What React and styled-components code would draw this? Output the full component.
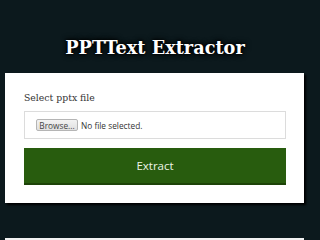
import React from "react";
import styled, { createGlobalStyle } from "styled-components";

const Global = createGlobalStyle`
  html, body { margin: 0; padding: 0; background: #0c191d; }
  body { font-family: "Noto Sans", sans-serif; }
`;

const Page = styled.div`
  width: 320px;
  height: 240px;
  overflow: hidden;
  background: #0c191d;
  display: flex;
  flex-direction: column;
  padding-top: 37px;
  box-sizing: border-box;
`;

const Title = styled.h1`
  margin: 0 0 14px 0;
  width: 310px;
  text-align: center;
  font-family: "DejaVu Serif", serif;
  font-weight: bold;
  font-size: 17.7px;
  line-height: 22px;
  color: #ffffff;
  text-shadow: 0 0 2px #000, 0 0 4px #000, 0 0 6px #000;
`;

const Card = styled.div`
  margin-left: 5px;
  width: 299px;
  background: #ffffff;
  box-sizing: border-box;
  padding: 18px 18px 18px 19px;
  box-shadow: 2px 2px 2px #000;
  display: flex;
  flex-direction: column;
`;

const Label = styled.label`
  font-family: "DejaVu Serif", serif;
  font-size: 9.3px;
  line-height: 14px;
  color: #333;
  margin-bottom: 6px;
`;

const FileBox = styled.div`
  height: 28px;
  border: 1px solid #dcdcdc;
  box-sizing: border-box;
  display: flex;
  align-items: center;
  padding-left: 11px;
  gap: 3px;
  margin-bottom: 9px;
`;

const BrowseButton = styled.span`
  display: inline-flex;
  align-items: center;
  justify-content: center;
  width: 42px;
  height: 12px;
  box-sizing: border-box;
  border: 1px solid #b5b5b5;
  border-radius: 2px;
  background: linear-gradient(#f2f2f2, #e0e0e0);
  font-size: 8.3px;
  color: #444;
  font-family: "Open Sans", sans-serif;
`;

const FileName = styled.span`
  font-family: "Open Sans", sans-serif;
  font-size: 8.3px;
  color: #333;
`;

const ExtractButton = styled.button`
  height: 37px;
  border: none;
  border-bottom: 2px solid #1d4308;
  background: #285c0e;
  color: #eef4e8;
  font-family: "Open Sans", sans-serif;
  font-size: 11.5px;
  cursor: pointer;
  padding: 0;
`;

const NextCard = styled.div`
  margin-left: 5px;
  width: 299px;
  height: 10px;
  margin-top: 35px;
  background: #f2f2f2;
  flex-shrink: 0;
`;

export default function App() {
  return (
    <>
      <Global />
      <Page>
        <Title>PPTText Extractor</Title>
        <Card>
          <Label>Select pptx file</Label>
          <FileBox>
            <BrowseButton>Browse...</BrowseButton>
            <FileName>No file selected.</FileName>
          </FileBox>
          <ExtractButton>Extract</ExtractButton>
        </Card>
        <NextCard />
      </Page>
    </>
  );
}
